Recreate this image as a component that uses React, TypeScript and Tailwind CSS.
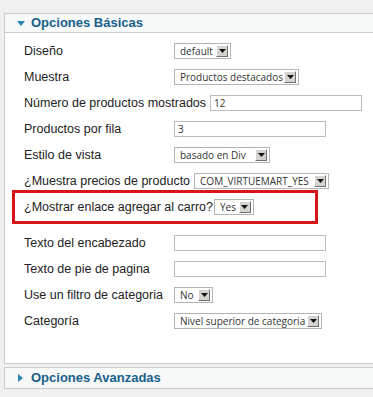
import React from "react";

const Arrow = () => (
  <span className="ml-auto mr-[2px] flex h-[12px] w-[12px] items-center justify-center border border-t-white border-l-white border-b-[#707070] border-r-[#707070] bg-[#d6d3ce]">
    <svg width="7" height="4" viewBox="0 0 7 4">
      <path d="M0 0h7L3.5 4z" fill="#111" />
    </svg>
  </span>
);

const Select = ({ value, width }: { value: string; width: string }) => (
  <div
    className={`flex h-[16px] items-center border border-[#b4b4b4] bg-white pl-[5px] text-[10px] text-[#333] ${width}`}
    style={{ fontFamily: '"Open Sans", sans-serif' }}
  >
    <span className="whitespace-nowrap leading-none">{value}</span>
    <Arrow />
  </div>
);

const Input = ({ value, width }: { value?: string; width: string }) => (
  <div
    className={`flex h-[16px] items-center border border-[#bdbdbd] bg-white pl-[3px] text-[10px] text-[#333] ${width}`}
    style={{ fontFamily: '"Open Sans", sans-serif' }}
  >
    {value}
  </div>
);

const Row = ({ label, children }: { label: string; children: React.ReactNode }) => (
  <div className="flex h-[26px] items-center">
    <span className="mr-[4px] min-w-[146px] whitespace-nowrap text-[12.5px] text-[#222]">{label}</span>
    {children}
  </div>
);

export default function App() {
  return (
    <div
      className="h-[397px] w-[373px] overflow-hidden bg-[#f0f0f0] pl-[4px] pt-[13px]"
      style={{ fontFamily: '"Liberation Sans", Arial, sans-serif' }}
    >
      <div className="w-[390px] border border-[#cccccc] bg-white">
        {/* cabecera */}
        <div className="flex h-[19px] items-center border-b border-[#cccccc] bg-[#f7f8f8] pl-[12px]">
          <svg width="8" height="5" viewBox="0 0 8 5" className="mr-[6px]">
            <path d="M0 0h8L4 5z" fill="#2a86b4" />
          </svg>
          <span className="text-[13px] font-bold text-[#17608b]">Opciones Básicas</span>
        </div>

        <div className="pb-[29px] pl-[19px] pt-[5px]">
          <Row label="Diseño">
            <Select value="default" width="w-[57px]" />
          </Row>
          <Row label="Muestra">
            <Select value="Productos destacados" width="w-[125px]" />
          </Row>
          <Row label="Número de productos mostrados">
            <Input value="12" width="w-[152px]" />
          </Row>
          <Row label="Productos por fila">
            <Input value="3" width="w-[152px]" />
          </Row>
          <Row label="Estilo de vista">
            <Select value="basado en Div" width="w-[96px]" />
          </Row>
          <Row label="¿Muestra precios de producto">
            <Select value="COM_VIRTUEMART_YES" width="w-[135px]" />
          </Row>

          {/* opción resaltada */}
          <div className="-ml-[12px] -mt-[4px] mb-[6px] flex h-[34px] w-[306px] items-center border-[3px] border-[#d8141b] pl-[9px]">
            <span className="mr-[1px] whitespace-nowrap text-[12.5px] text-[#222]">
              ¿Mostrar enlace agregar al carro?
            </span>
            <Select value="Yes" width="w-[40px]" />
          </div>

          <Row label="Texto del encabezado">
            <Input width="w-[152px]" />
          </Row>
          <Row label="Texto de pie de pagina">
            <Input width="w-[152px]" />
          </Row>
          <Row label="Use un filtro de categoria">
            <Select value="No" width="w-[39px]" />
          </Row>
          <Row label="Categoría">
            <Select value="Nivel superior de categoria" width="w-[148px]" />
          </Row>
        </div>
      </div>

      <div className="mt-[3px] flex h-[22px] w-[390px] items-center border border-[#cccccc] bg-[#f7f9f9] pl-[13px]">
        <svg width="5" height="8" viewBox="0 0 5 8" className="mr-[8px]">
          <path d="M0 0v8l5-4z" fill="#2a86b4" />
        </svg>
        <span className="text-[13px] font-bold text-[#17608b]">Opciones Avanzadas</span>
      </div>
    </div>
  );
}
